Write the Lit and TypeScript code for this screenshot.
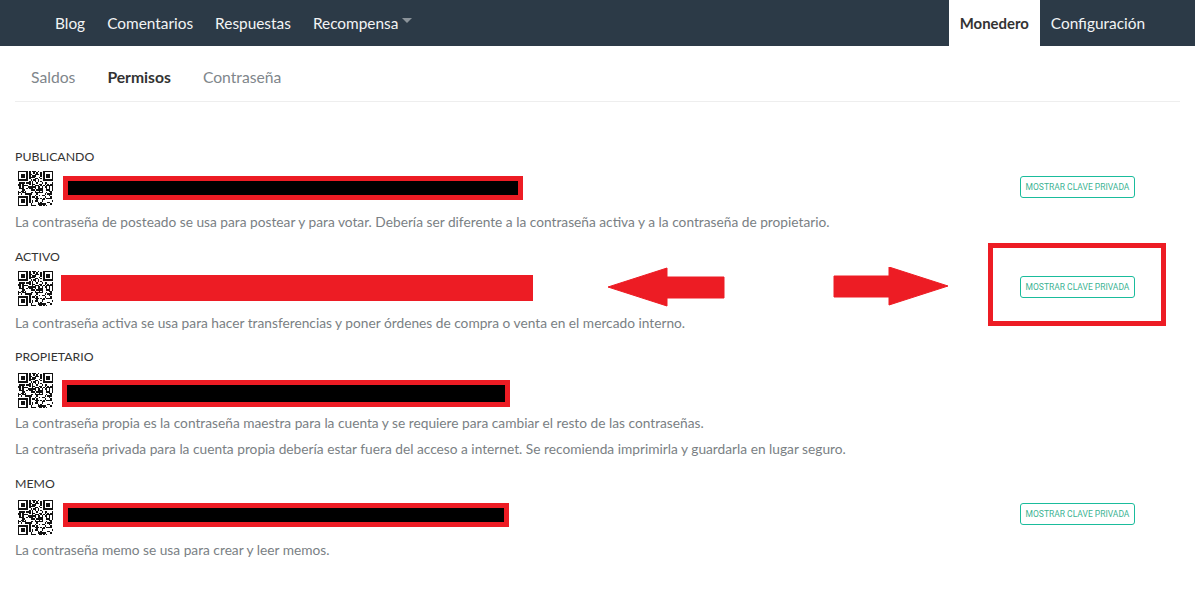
import { LitElement, html, css, svg } from "lit";
import { customElement } from "lit/decorators.js";

const N = 25;
function finder(x: number, y: number, m: boolean[][]) {
  for (let j = -1; j < 8; j++)
    for (let i = -1; i < 8; i++) {
      const a = x + i, b = y + j;
      if (a < 0 || b < 0 || a >= N || b >= N) continue;
      const ring = i >= 0 && i < 7 && j >= 0 && j < 7 && (i === 0 || i === 6 || j === 0 || j === 6);
      const core = i >= 2 && i < 5 && j >= 2 && j < 5;
      m[b][a] = ring || core;
    }
}
function qrModules() {
  const m: boolean[][] = [];
  let s = 7321;
  for (let y = 0; y < N; y++) {
    m.push([]);
    for (let x = 0; x < N; x++) {
      s = (s * 1103515245 + 12345) & 0x7fffffff;
      m[y].push(((s >> 16) & 3) < 2);
    }
  }
  finder(0, 0, m);
  finder(18, 0, m);
  finder(0, 18, m);
  return m;
}
const MODULES = qrModules();

const qr = () => html`<svg class="qr" viewBox="0 0 ${N} ${N}" shape-rendering="crispEdges" aria-hidden="true">
  ${MODULES.flatMap((row, y) =>
    row.map((on, x) => (on ? svg`<rect x=${x} y=${y} width="1" height="1" fill="#111"></rect>` : null))
  )}
</svg>`;

interface KeyRow {
  label: string;
  cls: string;
  rowCls: string;
  notes: string[];
  button: boolean;
  marked?: boolean;
}

const ROWS: KeyRow[] = [
  { label: "PUBLICANDO", cls: "k-pub", rowCls: "", button: true, notes: ["La contraseña de posteado se usa para postear y para votar. Debería ser diferente a la contraseña activa y a la contraseña de propietario."] },
  { label: "ACTIVO", cls: "k-act", rowCls: "r-act", button: true, marked: true, notes: ["La contraseña activa se usa para hacer transferencias y poner órdenes de compra o venta en el mercado interno."] },
  { label: "PROPIETARIO", cls: "k-own", rowCls: "r-own", button: false, notes: ["La contraseña propia es la contraseña maestra para la cuenta y se requiere para cambiar el resto de las contraseñas.", "La contraseña privada para la cuenta propia debería estar fuera del acceso a internet. Se recomienda imprimirla y guardarla en lugar seguro."] },
  { label: "MEMO", cls: "k-memo", rowCls: "r-memo", button: true, notes: ["La contraseña memo se usa para crear y leer memos."] },
];

@customElement("app-root")
export class AppRoot extends LitElement {
  static styles = css`
    :host {
      display: block;
      width: 1195px;
      height: 607px;
      overflow: hidden;
      background: #fff;
      font-family: "Lato", "Noto Sans", "Liberation Sans", sans-serif;
      color: #333;
    }
    .nav {
      display: flex;
      justify-content: space-between;
      height: 46px;
      background: #2c3a47;
      padding: 0 39px 0 44px;
      font-size: 15.4px;
    }
    .nav-group { display: flex; }
    .nav-item {
      display: flex;
      align-items: center;
      padding: 0 11px;
      color: #f2f4f5;
    }
    .caret {
      width: 0;
      height: 0;
      margin: 0 0 5px 4px;
      border-left: 5px solid transparent;
      border-right: 5px solid transparent;
      border-top: 5px solid #8b939a;
    }
    .nav-item.active {
      background: #fff;
      color: #333;
      font-weight: 700;
      font-size: 14.9px;
    }
    .tabs {
      display: flex;
      gap: 32px;
      margin: 0 15px;
      padding: 22px 16px 14px;
      height: 19px;
      line-height: 19px;
      border-bottom: 1px solid #eee;
      font-size: 15.7px;
      color: #80868b;
    }
    .tabs .on { color: #333; font-weight: 700; }
    .keys {
      padding: 47px 60px 0 15px;
    }
    .row { position: relative; }
    .label {
      font-size: 12.3px;
      line-height: 16px;
      margin-bottom: 5px;
      color: #333;
    }
    .line {
      display: flex;
      align-items: center;
      height: 36px;
    }
    .qr {
      width: 35px;
      height: 35px;
      margin-left: 3px;
      flex: none;
    }
    .r-own .label { margin-bottom: 7px; }
    .r-memo .qr { margin-top: 4px; }
    .key { box-sizing: border-box; background: #000; border: 5px solid #ed1c24; flex: none; }
    .k-pub { width: 460px; height: 24px; margin-left: 10px; }
    .k-act { width: 472px; height: 26px; margin-left: 8px; background: #ed1c24; }
    .k-own { width: 448px; height: 27px; margin: 6px 0 0 9px; }
    .k-memo { width: 446px; height: 24px; margin-left: 10px; }
    .btn {
      box-sizing: border-box;
      margin: 0 0 3px auto;
      width: 115px;
      height: 22px;
      padding: 0;
      border: 1px solid #1abc9c;
      border-radius: 3px;
      background: #fff;
      color: #3bb393;
      font-family: "Roboto", "Liberation Sans", sans-serif;
      font-size: 8.5px;
      text-align: center;
    }
    .note {
      margin: 0;
      font-size: 13.72px;
      line-height: 26px;
      color: #7a7f84;
    }
    .notes { padding: 3px 0 14px; }
    .r-act .notes, .r-memo .notes { padding: 4px 0 13px; }
    .r-own .notes { padding: 2px 0 14px; }
    .arrows {
      position: absolute;
      left: 593px;
      top: 18px;
      pointer-events: none;
    }
    .mark {
      position: absolute;
      box-sizing: border-box;
      left: 973px;
      top: -6px;
      width: 178px;
      height: 83px;
      border: 5px solid #ed1c24;
      pointer-events: none;
    }
  `;

  render() {
    return html`
      <nav class="nav">
        <div class="nav-group">
          <div class="nav-item">Blog</div>
          <div class="nav-item">Comentarios</div>
          <div class="nav-item">Respuestas</div>
          <div class="nav-item">Recompensa<span class="caret"></span></div>
        </div>
        <div class="nav-group">
          <div class="nav-item active">Monedero</div>
          <div class="nav-item">Configuración</div>
        </div>
      </nav>
      <div class="tabs">
        <span>Saldos</span>
        <span class="on">Permisos</span>
        <span>Contraseña</span>
      </div>
      <section class="keys">
        ${ROWS.map(
          (r) => html`
            <div class="row ${r.rowCls}">
              <div class="label">${r.label}</div>
              <div class="line">
                ${qr()}
                <div class="key ${r.cls}"></div>
                ${r.button ? html`<button class="btn">MOSTRAR CLAVE PRIVADA</button>` : null}
              </div>
              <div class="notes">${r.notes.map((n) => html`<p class="note">${n}</p>`)}</div>
              ${r.marked
                ? html`
                    <svg class="arrows" width="345" height="42" viewBox="0 0 345 42" aria-hidden="true">
                      <path d="M0 20 L59 1 V10 H116 V31 H59 V39 Z" fill="#ed1c24" stroke="#ed1c24" stroke-linejoin="round"></path>
                      <path d="M340 19 L281 0 V9 H226 V30 H281 V38 Z" fill="#ed1c24" stroke="#ed1c24" stroke-linejoin="round"></path>
                    </svg>
                    <div class="mark"></div>
                  `
                : null}
            </div>
          `
        )}
      </section>
    `;
  }
}
